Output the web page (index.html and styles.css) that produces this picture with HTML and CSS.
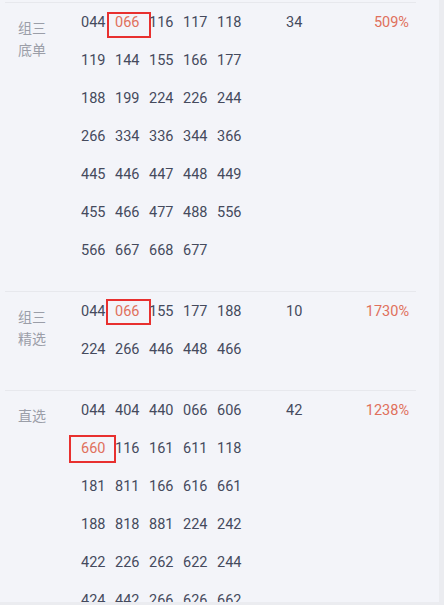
FILE: index.html
```html
<!DOCTYPE html>
<html lang="zh">
<head>
<meta charset="utf-8">
<link rel="stylesheet" href="styles.css">
</head>
<body>
<div class="page">
  <section class="sec">
    <div class="label">组三<br>底单</div>
    <div class="nums">
      <span>044</span><span class="mark mark-a">066</span><span>116</span><span>117</span><span>118</span>
      <span>119</span><span>144</span><span>155</span><span>166</span><span>177</span>
      <span>188</span><span>199</span><span>224</span><span>226</span><span>244</span>
      <span>266</span><span>334</span><span>336</span><span>344</span><span>366</span>
      <span>445</span><span>446</span><span>447</span><span>448</span><span>449</span>
      <span>455</span><span>466</span><span>477</span><span>488</span><span>556</span>
      <span>566</span><span>667</span><span>668</span><span>677</span>
    </div>
    <div class="count">34</div>
    <div class="pct">509%</div>
  </section>
  <section class="sec">
    <div class="label">组三<br>精选</div>
    <div class="nums">
      <span>044</span><span class="mark mark-b">066</span><span>155</span><span>177</span><span>188</span>
      <span>224</span><span>266</span><span>446</span><span>448</span><span>466</span>
    </div>
    <div class="count">10</div>
    <div class="pct">1730%</div>
  </section>
  <section class="sec">
    <div class="label">直选</div>
    <div class="nums">
      <span>044</span><span>404</span><span>440</span><span>066</span><span>606</span>
      <span class="mark mark-c">660</span><span>116</span><span>161</span><span>611</span><span>118</span>
      <span>181</span><span>811</span><span>166</span><span>616</span><span>661</span>
      <span>188</span><span>818</span><span>881</span><span>224</span><span>242</span>
      <span>422</span><span>226</span><span>262</span><span>622</span><span>244</span>
      <span>424</span><span>442</span><span>266</span><span>626</span><span>662</span>
    </div>
    <div class="count">42</div>
    <div class="pct">1238%</div>
  </section>
</div>
</body>
</html>
```
FILE: styles.css
```css
html, body {
  margin: 0;
  padding: 0;
  background: #ffffff;
}
body {
  width: 444px;
  height: 605px;
  overflow: hidden;
  background: #ebecf0;
}
.page {
  width: 439px;
  height: 602px;
  overflow: hidden;
  background: #f3f4f9;
  padding-top: 2px;
  box-sizing: border-box;
  font-family: Roboto, "Noto Sans CJK SC", sans-serif;
}
.sec {
  display: flex;
  align-items: flex-start;
  margin: 0 23px 0 5px;
  border-top: 1px solid #e7e8ed;
  padding: 1px 0 21px 0;
}
.label {
  width: 63px;
  padding-left: 13px;
  padding-top: 12px;
  font-family: "Noto Sans CJK SC", sans-serif;
  font-size: 14px;
  line-height: 22px;
  color: #9b9ea8;
  flex: none;
}
.nums {
  display: grid;
  grid-template-columns: repeat(5, 34px);
  grid-auto-rows: 38px;
  width: 170px;
  flex: none;
}
.nums span {
  position: relative;
  font-size: 14.5px;
  line-height: 38px;
  color: #454a5d;
  white-space: nowrap;
}
.nums .mark {
  color: #e0705c;
}
.mark::after {
  content: "";
  position: absolute;
  border: 2px solid #e8302f;
}
.mark-a::after {
  left: -8px;
  right: -2px;
  top: 8px;
  bottom: 4px;
}
.mark-b::after {
  left: -9px;
  right: -2px;
  top: 6px;
  bottom: 6px;
}
.mark-c::after {
  left: -12px;
  right: -1px;
  top: 5px;
  bottom: 5px;
}
.count {
  margin-left: 35px;
  width: 50px;
  font-size: 14.5px;
  line-height: 38px;
  color: #454a5d;
  flex: none;
}
.pct {
  flex: 1;
  text-align: right;
  padding-right: 7px;
  font-size: 14.5px;
  line-height: 38px;
  color: #e0705c;
}
```
